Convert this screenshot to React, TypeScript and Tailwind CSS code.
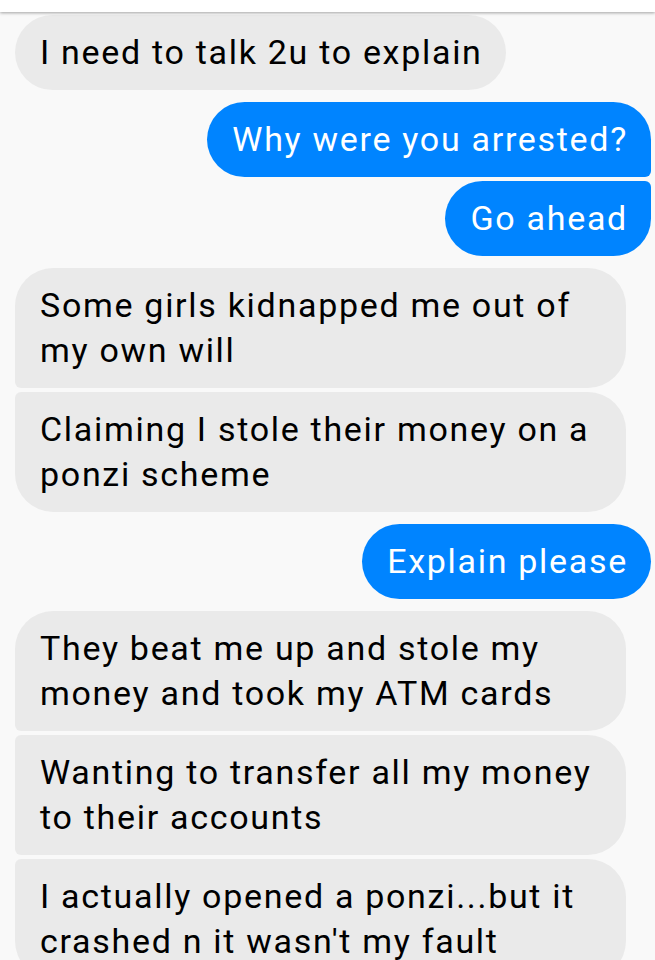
type Msg = { text: string; mine: boolean };

const messages: Msg[] = [
  { text: "I need to talk 2u to explain", mine: false },
  { text: "Why were you arrested?", mine: true },
  { text: "Go ahead", mine: true },
  { text: "Some girls kidnapped me out of my own will", mine: false },
  { text: "Claiming I stole their money on a ponzi scheme", mine: false },
  { text: "Explain please", mine: true },
  { text: "They beat me up and stole my money and took my ATM cards", mine: false },
  { text: "Wanting to transfer all my money to their accounts", mine: false },
  { text: "I actually opened a ponzi...but it crashed n it wasn't my fault", mine: false },
];

// corner classes depend on position inside a run of same-sender bubbles
function corners(mine: boolean, first: boolean, last: boolean) {
  if (mine) {
    return [
      "rounded-l-[38px]",
      first ? "rounded-tr-[38px]" : "rounded-tr-[6px]",
      last ? "rounded-br-[38px]" : "rounded-br-[6px]",
    ].join(" ");
  }
  return [
    "rounded-r-[38px]",
    first ? "rounded-tl-[38px]" : "rounded-tl-[6px]",
    last ? "rounded-bl-[38px]" : "rounded-bl-[6px]",
  ].join(" ");
}

export default function App() {
  return (
    <div className="h-[960px] w-[655px] overflow-hidden bg-[#f9f9f9] font-['Roboto',sans-serif]">
      <div className="relative z-10 h-[12px] bg-white shadow-[0_1px_3px_rgba(0,0,0,0.35)]" />
      <div className="flex flex-col pl-[15px] pr-[4px] pt-[3px]">
        {messages.map((m, i) => {
          const prev = messages[i - 1];
          const next = messages[i + 1];
          const first = !prev || prev.mine !== m.mine;
          const last = !next || next.mine !== m.mine;
          return (
            <div
              key={i}
              className={`flex ${m.mine ? "justify-end" : "justify-start"} ${
                i === 0 ? "" : first ? "mt-[12px]" : "mt-[4px]"
              }`}
            >
              <div
                className={`max-w-[611px] py-[15px] pl-[25px] pr-[23px] text-[34px] leading-[45px] tracking-[1.7px] ${corners(
                  m.mine,
                  first,
                  last,
                )} ${m.mine ? "bg-[#0084ff] text-white" : "bg-[#eaeaea] text-black"}`}
              >
                {m.text}
              </div>
            </div>
          );
        })}
      </div>
    </div>
  );
}
